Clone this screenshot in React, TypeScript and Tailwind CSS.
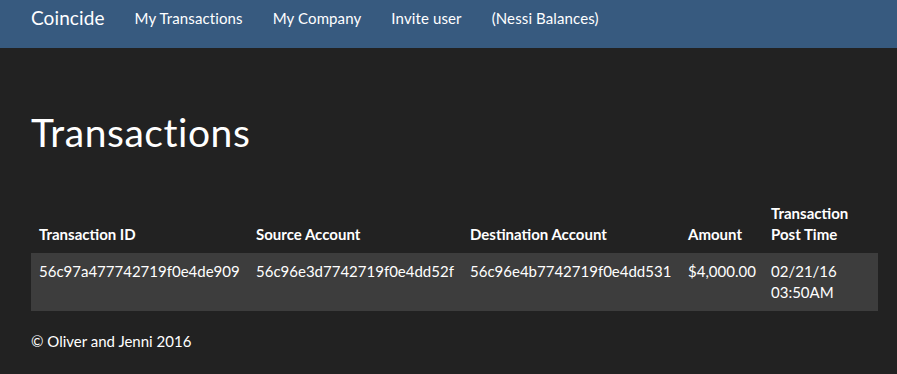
const rows = [
  {
    id: "56c97a477742719f0e4de909",
    source: "56c96e3d7742719f0e4dd52f",
    dest: "56c96e4b7742719f0e4dd531",
    amount: "$4,000.00",
    date: "02/21/16",
    time: "03:50AM",
  },
];

export default function App() {
  return (
    <div className="min-h-[374px] bg-[#222222] text-white font-['Lato',sans-serif] text-[15px] leading-[21px]">
      <nav className="h-[48px] bg-[#375a7f] flex items-start pl-[31px]">
        <a className="pt-[7px] text-[19px] leading-[21px] tracking-[0.1px] mr-[30px]">Coincide</a>
        <ul className="flex gap-[30px] pt-[8px] tracking-[0.12px]">
          <li>My Transactions</li>
          <li>My Company</li>
          <li>Invite user</li>
          <li>(Nessi Balances)</li>
        </ul>
      </nav>

      <main className="pl-[31px] pr-[19px]">
        <h1 className="mt-[63px] text-[39px] leading-[43px] tracking-[0.55px]">Transactions</h1>

        <table className="mt-[41px] w-full table-fixed border-collapse">
          <colgroup>
            <col className="w-[217px]" />
            <col className="w-[214px]" />
            <col className="w-[218px]" />
            <col className="w-[83px]" />
            <col />
          </colgroup>
          <thead>
            <tr className="font-bold text-left">
              <th className="p-2 align-bottom">Transaction ID</th>
              <th className="p-2 align-bottom">Source Account</th>
              <th className="p-2 align-bottom">Destination Account</th>
              <th className="p-2 align-bottom">Amount</th>
              <th className="p-2 align-bottom">
                Transaction
                <br />
                Post Time
              </th>
            </tr>
          </thead>
          <tbody>
            {rows.map((r) => (
              <tr key={r.id} className="bg-[#3d3d3d]">
                <td className="p-2 align-top">{r.id}</td>
                <td className="p-2 align-top">{r.source}</td>
                <td className="p-2 align-top">{r.dest}</td>
                <td className="p-2 align-top">{r.amount}</td>
                <td className="p-2 align-top">
                  {r.date}
                  <br />
                  {r.time}
                </td>
              </tr>
            ))}
          </tbody>
        </table>

        <footer className="mt-[20px] pb-[22px]">© Oliver and Jenni 2016</footer>
      </main>
    </div>
  );
}
